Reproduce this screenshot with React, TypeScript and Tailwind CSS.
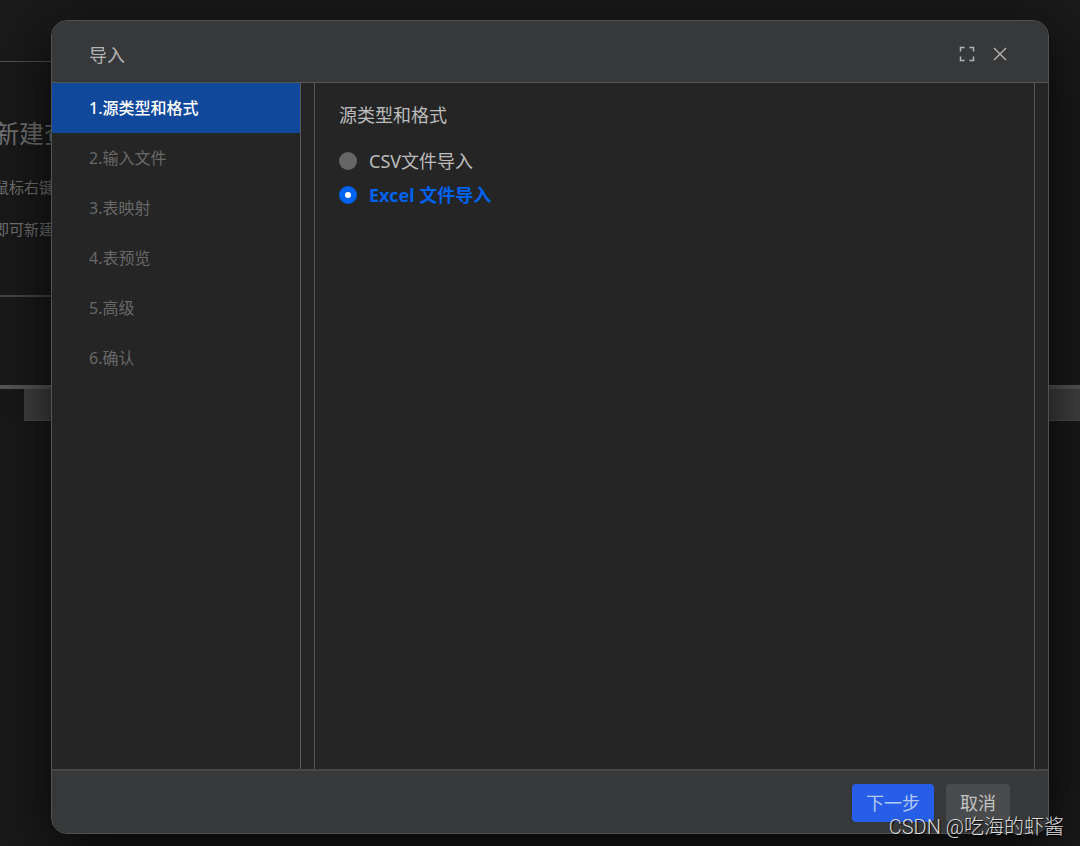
import { useState } from "react";

const steps = ["源类型和格式", "输入文件", "表映射", "表预览", "高级", "确认"];

const sources = [
  { id: "csv", label: "CSV文件导入" },
  { id: "excel", label: "Excel 文件导入" },
];

function Workspace() {
  return (
    <div className="flex min-h-screen flex-col overflow-hidden bg-[#1a1a1a] text-[#747474]">
      <div className="h-[61px]" />
      <section className="-ml-1.5 flex h-[236px] w-1/2 flex-col whitespace-nowrap border-t border-b-2 border-t-[#525252] border-b-[#464646] pt-[53px]">
        <h1 className="text-[25px] leading-9">新建查询</h1>
        <p className="mt-6 text-[15px] leading-6">鼠标右键</p>
        <p className="mt-[18px] text-[15px] leading-6">即可新建</p>
      </section>
      <div className="mt-[88px] h-1 bg-[#575757]" />
      <div className="flex h-8">
        <div className="w-6 bg-[#191919]" />
        <div className="flex-1 border-b border-[#505050] bg-[#424242]" />
      </div>
      <div className="flex-1" />
    </div>
  );
}

function ImportDialog() {
  const [source, setSource] = useState("excel");

  return (
    <div
      role="dialog"
      aria-labelledby="dialog-title"
      className="flex flex-1 flex-col overflow-hidden rounded-2xl border border-[#525252] bg-[#252525] shadow-[0_16px_64px_0_rgba(0,0,0,0.8)]"
    >
      <header className="flex h-[62px] items-center justify-between border-b border-[#555555] bg-[#37383a] pt-1.5 pr-9 pl-[37px] text-[#b4b4b4]">
        <h2 id="dialog-title" className="text-lg leading-6">
          导入
        </h2>
        <div className="flex items-center gap-[9px] pb-0.5">
          <button type="button" aria-label="全屏" className="flex size-6 items-center justify-center">
            <svg width="16" height="16" viewBox="0 0 16 16" fill="none" stroke="currentColor" strokeWidth="1.5">
              <path d="M1.5 5.5v-4h4M10.5 1.5h4v4M14.5 10.5v4h-4M5.5 14.5h-4v-4" />
            </svg>
          </button>
          <button type="button" aria-label="关闭" className="flex size-6 items-center justify-center">
            <svg width="14" height="14" viewBox="0 0 14 14" fill="none" stroke="currentColor" strokeWidth="1.4">
              <path d="M1 1l12 12M13 1L1 13" />
            </svg>
          </button>
        </div>
      </header>

      <div className="flex flex-1">
        <nav className="w-[249px] border-r border-[#5a5a5a]">
          <ol>
            {steps.map((step, index) => (
              <li
                key={step}
                className={
                  index === 0
                    ? "flex h-[50px] items-center bg-[#10489b] pl-[37px] font-medium text-white"
                    : "flex h-[50px] items-center pl-[37px] text-[#686868]"
                }
              >
                {index + 1}.{step}
              </li>
            ))}
          </ol>
        </nav>

        <fieldset className="mr-[13px] ml-[13px] min-w-0 flex-1 border-r border-l border-[#555555] px-6 pt-5 text-lg text-[#bcbcbc]">
          <h3 className="mb-[22px] leading-6">源类型和格式</h3>
          <div className="flex flex-col gap-2.5">
            {sources.map(({ id, label }) => (
              <label
                key={id}
                className={
                  source === id
                    ? "flex h-6 items-center gap-3 font-bold text-[#0062f0]"
                    : "flex h-6 items-center gap-3"
                }
              >
                <input
                  type="radio"
                  name="source"
                  value={id}
                  checked={source === id}
                  onChange={() => setSource(id)}
                  className="size-[18px] shrink-0 appearance-none rounded-full bg-[#666666] checked:border-6 checked:border-[#0062f0] checked:bg-white"
                />
                <span>{label}</span>
              </label>
            ))}
          </div>
        </fieldset>
      </div>

      <footer className="flex h-16 items-center justify-end gap-3 border-t-2 border-[#474747] bg-[#37383a] pt-0.5 pr-[38px] text-lg">
        <button type="button" className="h-[38px] rounded bg-[#265ee8] px-3.5 text-[#b5caf8]">
          下一步
        </button>
        <button type="button" className="h-[38px] rounded bg-[#4a4b4c] px-3.5 text-[#c2c2c2]">
          取消
        </button>
      </footer>
    </div>
  );
}

export default function App() {
  return (
    <main className="relative min-h-screen overflow-hidden font-['Noto_Sans','Noto_Sans_CJK_SC',sans-serif]">
      <Workspace />
      <div className="absolute inset-0 flex pt-5 pr-[31px] pb-3 pl-[51px]">
        <ImportDialog />
      </div>
      <p className="absolute right-4 bottom-[3px] font-['Roboto','Noto_Sans_CJK_SC',sans-serif] text-xl leading-8 font-light text-[#dddddd] [text-shadow:1px_1px_1px_#000000]">
        CSDN @吃海的虾酱
      </p>
    </main>
  );
}
